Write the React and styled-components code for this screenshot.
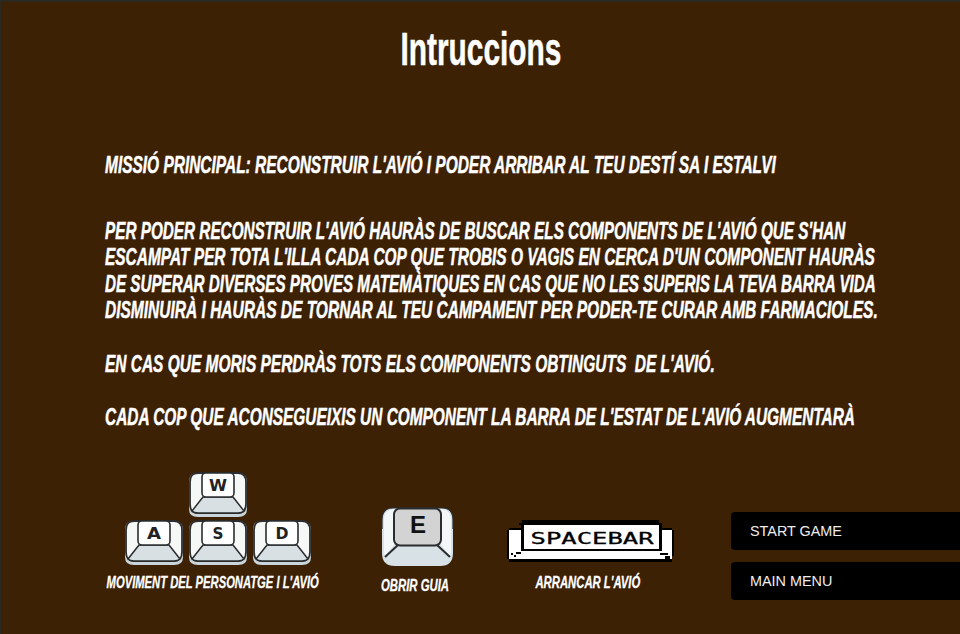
import React, { useLayoutEffect, useRef } from 'react';
import styled, { createGlobalStyle } from 'styled-components';

const GlobalStyle = createGlobalStyle`
  html, body {
    margin: 0;
    padding: 0;
    background: #3c2104;
  }
`;

const Page = styled.div`
  box-sizing: border-box;
  width: 960px;
  height: 634px;
  overflow: hidden;
  background: #3c2104;
  border-top: 2px solid #2b2a22;
  border-left: 1px solid #2b2a22;
  display: flex;
  flex-direction: column;
`;

const Title = styled.h1`
  margin: 22px 0 0;
  height: 50px;
  line-height: 50px;
  text-align: center;
  font-family: 'Liberation Sans', Arial, sans-serif;
  font-weight: 700;
  font-size: 46px;
  color: #fff;
  -webkit-text-stroke: 0.5px #fff;
`;

const Text = styled.div`
  margin: 78px 0 0 104px;
  display: flex;
  flex-direction: column;
  gap: 27px;
  font-family: 'Liberation Sans', Arial, sans-serif;
  font-weight: 700;
  font-style: italic;
  font-size: 23.5px;
  line-height: 26.5px;
  color: #fff;
  white-space: pre;
  -webkit-text-stroke: 0.5px #fff;
`;

const Lead = styled.div`
  margin-bottom: 12px;
`;

const Para = styled.div``;

const Squeezed = styled.span`
  display: ${(p) => (p.$inline ? 'inline-block' : 'block')};
  width: max-content;
  white-space: pre;
  transform-origin: ${(p) => (p.$inline ? 'center' : 'left')} center;
`;

const Bottom = styled.div`
  margin-top: 41px;
  display: flex;
  align-items: flex-start;
`;

const Control = styled.div`
  width: ${(p) => p.$width}px;
  margin-left: ${(p) => p.$left}px;
  padding-top: ${(p) => p.$top}px;
  display: flex;
  flex-direction: column;
  align-items: center;
`;

const Caption = styled.span`
  margin-top: ${(p) => p.$gap}px;
  margin-right: ${(p) => p.$right || 0}px;
  font-family: 'Liberation Sans', Arial, sans-serif;
  font-weight: 700;
  font-style: italic;
  font-size: 17px;
  line-height: 20px;
  color: #fff;
  white-space: nowrap;
  -webkit-text-stroke: 0.3px #fff;
`;

const KeyGrid = styled.div`
  display: grid;
  grid-template-columns: repeat(3, 60px);
  column-gap: 4px;
  row-gap: 2px;
  margin-left: 10px;
`;

const KeySlot = styled.div`
  grid-column: ${(p) => p.$col};
  height: 46px;
`;

const Buttons = styled.div`
  margin-left: auto;
  margin-top: 40px;
  width: 229px;
  display: flex;
  flex-direction: column;
  gap: 12px;
`;

const MenuButton = styled.button`
  height: 38px;
  border: none;
  border-radius: 4px 0 0 4px;
  background: #000;
  color: #eee;
  text-align: left;
  padding: 0 0 0 19px;
  font-family: 'Liberation Sans', Arial, sans-serif;
  font-size: 14.4px;
`;

// the original type is a condensed display face, so each line is squeezed to its width
const Fit = ({ width, inline, children }) => {
  const ref = useRef(null);
  useLayoutEffect(() => {
    const el = ref.current;
    el.style.transform = `scaleX(${width / el.offsetWidth})`;
  }, [width]);
  return (
    <Squeezed ref={ref} $inline={inline}>
      {children}
    </Squeezed>
  );
};

const INK = '#2a2c2e';
const LETTER_WIDTH = { W: 18, A: 14, S: 11, D: 13 };

// keycap, viewBox is 60x46
const Key = ({ label }) => (
  <svg width="60" height="46" viewBox="0 0 60 46">
    <path d="M9 1 H51 Q59 1 59 10 V37 Q59 45 50 45 H10 Q1 45 1 37 V10 Q1 1 9 1 Z" fill="#ccd6da" />
    <path d="M10 1 H50 Q58 1 58 10 V32 Q58 41 50 41 H10 Q2 41 2 32 V10 Q2 1 10 1 Z" fill="#f6f8f8" stroke={INK} strokeWidth="1.8" />
    <path d="M15 25 H45 L56 39 Q54 41 50 41 H10 Q6 41 4 39 Z" fill="#d8e0e3" stroke={INK} strokeWidth="1.5" strokeLinejoin="round" />
    <rect x="14" y="1" width="32" height="24" rx="4" fill="#fff" stroke={INK} strokeWidth="1.6" />
    <text
      x="30"
      y="19"
      textAnchor="middle"
      textLength={LETTER_WIDTH[label]}
      lengthAdjust="spacingAndGlyphs"
      fontFamily="'DejaVu Sans', sans-serif"
      fontWeight="700"
      fontSize="15"
      fill="#222"
    >
      {label}
    </text>
  </svg>
);

// the E key is a bigger, softer cap with a grey face
const BigKey = ({ label }) => (
  <svg width="73" height="60" viewBox="0 0 73 60">
    <path d="M12 1 H61 Q72 1 72 13 V46 Q72 59 59 59 H14 Q1 59 1 46 V13 Q1 1 12 1 Z" fill="#d7e1e6" />
    <path d="M3 12 Q3 3 13 2 L13 38 L4 49 Q3 47 3 44 Z M70 12 Q70 3 60 2 L60 38 L69 49 Q70 47 70 44 Z" fill="#f4f7f8" />
    <path d="M12 1 H61 Q72 1 72 13 V22 M1 22 V13 Q1 1 12 1" fill="none" stroke={INK} strokeWidth="1.2" />
    <path d="M17 38 L4 50 M56 38 L69 50" fill="none" stroke={INK} strokeWidth="2" />
    <rect x="13" y="1.5" width="47" height="37" rx="6" fill="#d3d3d3" stroke={INK} strokeWidth="2" />
    <text x="37" y="26" textAnchor="middle" fontFamily="'Liberation Sans', Arial, sans-serif" fontWeight="700" fontSize="24" fill="#111">
      {label}
    </text>
  </svg>
);

// pixel art spacebar
const SpaceKey = () => (
  <svg width="167" height="42" viewBox="0 0 167 42" shapeRendering="crispEdges">
    <rect x="2" y="8" width="163" height="34" fill="#000" />
    <rect x="0" y="10" width="167" height="29" fill="#000" />
    <rect x="2" y="10" width="163" height="29" fill="#fff" />
    <rect x="15" y="0" width="137" height="4" fill="#000" />
    <rect x="12" y="3" width="143" height="2" fill="#000" />
    <rect x="14" y="4" width="3" height="27" fill="#000" />
    <rect x="152" y="4" width="3" height="27" fill="#000" />
    <rect x="14" y="29" width="141" height="2" fill="#000" />
    <rect x="17" y="5" width="135" height="24" fill="#fff" />
    <rect x="4" y="33" width="2" height="2" fill="#000" />
    <rect x="7" y="35" width="2" height="2" fill="#000" />
    <rect x="9" y="32" width="5" height="2" fill="#000" />
    <rect x="153" y="33" width="8" height="2" fill="#000" />
    <rect x="158" y="36" width="5" height="3" fill="#000" />
    <rect x="165" y="36" width="2" height="6" fill="#3c2104" />
    <text
      x="85"
      y="24"
      textAnchor="middle"
      textLength="123"
      lengthAdjust="spacingAndGlyphs"
      fontFamily="'DejaVu Sans Mono', monospace"
      fontSize="16"
      stroke="#000"
      strokeWidth="0.3"
      fill="#000"
    >
      SPACEBAR
    </text>
  </svg>
);

const App = () => (
  <Page>
    <GlobalStyle />
    <Title>
      <Fit width={161} inline>Intruccions</Fit>
    </Title>
    <Text>
      <Lead>
        <Fit width={671}>MISSIÓ PRINCIPAL: RECONSTRUIR L'AVIÓ I PODER ARRIBAR AL TEU DESTÍ SA I ESTALVI</Fit>
      </Lead>
      <Para>
        <Fit width={740}>PER PODER RECONSTRUIR L'AVIÓ HAURÀS DE BUSCAR ELS COMPONENTS DE L'AVIÓ QUE S'HAN</Fit>
        <Fit width={770}>ESCAMPAT PER TOTA L'ILLA CADA COP QUE TROBIS O VAGIS EN CERCA D'UN COMPONENT HAURÀS</Fit>
        <Fit width={771}>DE SUPERAR DIVERSES PROVES MATEMÀTIQUES EN CAS QUE NO LES SUPERIS LA TEVA BARRA VIDA</Fit>
        <Fit width={773}>DISMINUIRÀ I HAURÀS DE TORNAR AL TEU CAMPAMENT PER PODER-TE CURAR AMB FARMACIOLES.</Fit>
      </Para>
      <Para>
        <Fit width={610}>EN CAS QUE MORIS PERDRÀS TOTS ELS COMPONENTS OBTINGUTS  DE L'AVIÓ.</Fit>
      </Para>
      <Para>
        <Fit width={750}>CADA COP QUE ACONSEGUEIXIS UN COMPONENT LA BARRA DE L'ESTAT DE L'AVIÓ AUGMENTARÀ</Fit>
      </Para>
    </Text>
    <Bottom>
      <Control $left={105} $width={214} $top={0}>
        <KeyGrid>
          <KeySlot $col={2}><Key label="W" /></KeySlot>
          <KeySlot $col={1}><Key label="A" /></KeySlot>
          <KeySlot $col={2}><Key label="S" /></KeySlot>
          <KeySlot $col={3}><Key label="D" /></KeySlot>
        </KeyGrid>
        <Caption $gap={7}>
          <Fit width={212} inline>MOVIMENT DEL PERSONATGE I L'AVIÓ</Fit>
        </Caption>
      </Control>
      <Control $left={59} $width={76} $top={35}>
        <BigKey label="E" />
        <Caption $gap={9} $right={4}>
          <Fit width={68} inline>OBRIR GUIA</Fit>
        </Caption>
      </Control>
      <Control $left={52} $width={167} $top={48}>
        <SpaceKey />
        <Caption $gap={11} $right={6}>
          <Fit width={105} inline>ARRANCAR L'AVIÓ</Fit>
        </Caption>
      </Control>
      <Buttons>
        <MenuButton>START GAME</MenuButton>
        <MenuButton>MAIN MENU</MenuButton>
      </Buttons>
    </Bottom>
  </Page>
);

export default App;
